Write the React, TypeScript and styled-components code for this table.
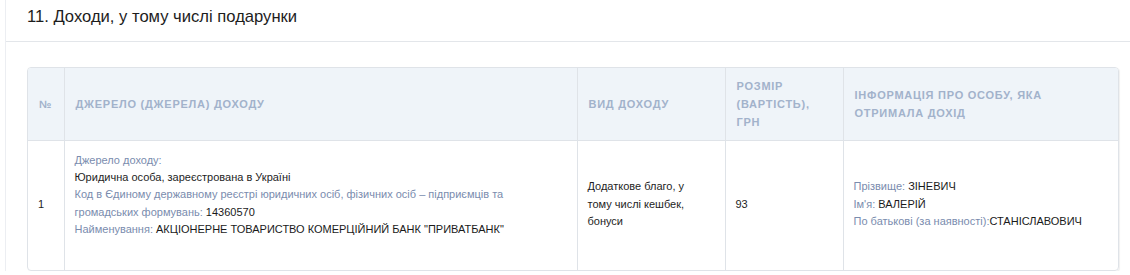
import React from 'react';
import styled, { createGlobalStyle } from 'styled-components';

const GlobalStyle = createGlobalStyle`
  html, body {
    margin: 0;
    padding: 0;
    background: #fff;
    overflow: hidden;
  }
  body {
    font-family: 'Liberation Sans', Arial, sans-serif;
    color: #222;
  }
`;

const Panel = styled.section`
  margin-left: 5px;
  width: 1134px;
  border-left: 1px solid #eceef2;
  background: #fff;
`;

const PanelHeader = styled.div`
  height: 42px;
  box-sizing: border-box;
  padding: 7px 21px 0;
  border-bottom: 1px solid #e3e6ea;
`;

const Title = styled.h2`
  margin: 0;
  font-family: 'Liberation Sans', Arial, sans-serif;
  font-size: 16.6px;
  font-weight: 400;
  line-height: 20px;
  color: #1d1d1d;
`;

const TableWrap = styled.div`
  margin: 25px 21px 0;
  border: 1px solid #dfe3e8;
  border-radius: 4px;
  overflow: hidden;
  box-shadow: 1px 1px 1px rgba(0, 0, 0, 0.06);
`;

const Table = styled.table`
  width: 100%;
  table-layout: fixed;
  border-collapse: collapse;
  font-family: 'Liberation Sans', Arial, sans-serif;
  font-size: 11px;
`;

const HeadCell = styled.th<{ $padRight?: number }>`
  background: #eff4f9;
  color: #a2b2cb;
  font-size: 11px;
  font-weight: 700;
  letter-spacing: 0.75px;
  text-transform: uppercase;
  text-align: left;
  vertical-align: middle;
  line-height: 18px;
  height: 72px;
  box-sizing: border-box;
  padding: 0 ${({ $padRight }) => $padRight ?? 11}px 0 11px;
  border-bottom: 1px solid #dfe3e8;
  & + & {
    border-left: 1px solid #dfe3e8;
  }
`;

const Cell = styled.td<{ $top?: boolean; $padRight?: number }>`
  vertical-align: ${({ $top }) => ($top ? 'top' : 'middle')};
  padding: ${({ $top }) => ($top ? '11px' : '0')} ${({ $padRight }) => $padRight ?? 11}px
    ${({ $top }) => ($top ? '30px' : '2px')} 10px;
  line-height: 17.4px;
  color: #1e1e1e;
  height: 130px;
  box-sizing: border-box;
  & + & {
    border-left: 1px solid #dfe3e8;
  }
`;

const Line = styled.div``;

const Label = styled.span`
  color: #7a8cae;
`;

const Value = styled.span`
  color: #1a1a1a;
`;

const Field: React.FC<{ label: string; value?: string; gap?: boolean }> = ({ label, value, gap = true }) => (
  <Line>
    <Label>{label}</Label>
    {value && (gap ? ' ' : '')}
    {value && <Value>{value}</Value>}
  </Line>
);

const App: React.FC = () => {
  return (
    <>
      <GlobalStyle />
      <Panel>
        <PanelHeader>
          <Title>11. Доходи, у тому числі подарунки</Title>
        </PanelHeader>
        <TableWrap>
          <Table>
            <colgroup>
              <col style={{ width: 36 }} />
              <col style={{ width: 513 }} />
              <col style={{ width: 148 }} />
              <col style={{ width: 118 }} />
              <col />
            </colgroup>
            <thead>
              <tr>
                <HeadCell>№</HeadCell>
                <HeadCell>Джерело (джерела) доходу</HeadCell>
                <HeadCell>Вид доходу</HeadCell>
                <HeadCell>Розмір (вартість), грн</HeadCell>
                <HeadCell $padRight={24}>Інформація про особу, яка отримала дохід</HeadCell>
              </tr>
            </thead>
            <tbody>
              <tr>
                <Cell>1</Cell>
                <Cell $top $padRight={64}>
                  <Field label="Джерело доходу:" />
                  <Line>Юридична особа, зареєстрована в Україні</Line>
                  <Field
                    label="Код в Єдиному державному реєстрі юридичних осіб, фізичних осіб – підприємців та громадських формувань:"
                    value="14360570"
                  />
                  <Field label="Найменування:" value='АКЦІОНЕРНЕ ТОВАРИСТВО КОМЕРЦІЙНИЙ БАНК "ПРИВАТБАНК"' />
                </Cell>
                <Cell $padRight={30}>Додаткове благо, у тому числі кешбек, бонуси</Cell>
                <Cell>93</Cell>
                <Cell>
                  <Field label="Прізвище:" value="ЗІНЕВИЧ" />
                  <Field label="Ім'я:" value="ВАЛЕРІЙ" />
                  <Field label="По батькові (за наявності):" value="СТАНІСЛАВОВИЧ" gap={false} />
                </Cell>
              </tr>
            </tbody>
          </Table>
        </TableWrap>
      </Panel>
    </>
  );
};

export default App;
